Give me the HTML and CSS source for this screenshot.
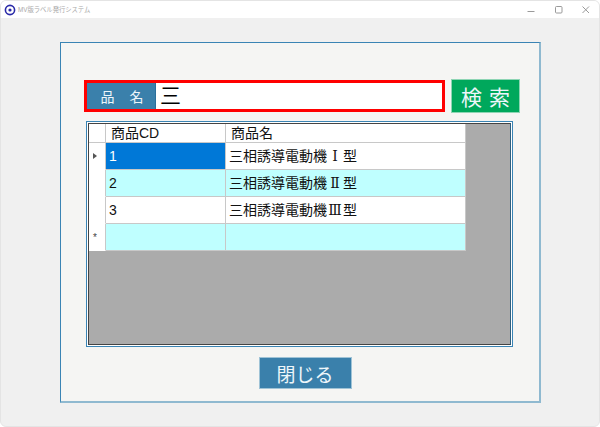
FILE: index.html
```html
<!DOCTYPE html>
<html lang="ja">
<head>
<meta charset="utf-8">
<title>MV版ラベル発行システム</title>
<link rel="stylesheet" href="styles.css">
</head>
<body>
<div class="window">
  <header class="titlebar">
    <svg class="app-icon" width="12" height="12" viewBox="0 0 12 12"><circle cx="6" cy="6" r="4.6" fill="#fff" stroke="#2a2aa8" stroke-width="1.6"/><circle cx="6" cy="6" r="1.6" fill="#2a2aa8"/></svg>
    <span class="title">MV版ラベル発行システム</span>
    <div class="controls">
      <svg width="10" height="10" viewBox="0 0 10 10"><path d="M1.5 6.5H8.5" stroke="#9a9a9a" fill="none"/></svg>
      <svg width="10" height="10" viewBox="0 0 10 10"><rect x="1.5" y="1.5" width="6.5" height="6.5" rx="1" stroke="#9a9a9a" fill="none"/></svg>
      <svg width="10" height="10" viewBox="0 0 10 10"><path d="M1.5 1.5L8 8M8 1.5L1.5 8" stroke="#9a9a9a" fill="none"/></svg>
    </div>
  </header>
  <main class="client">
    <section class="panel">
      <div class="search-row">
        <div class="search-box">
          <div class="search-label"><span>品</span><span>名</span></div>
          <div class="search-input">三</div>
        </div>
        <button class="btn btn-search"><span>検</span><span>索</span></button>
      </div>
      <div class="grid-frame">
        <div class="grid-inner">
          <div class="grid">
            <div class="cell head corner"></div>
            <div class="cell head col">商品CD</div>
            <div class="cell head col">商品名</div>

            <div class="cell rowhead"><span class="arrow"></span></div>
            <div class="cell selected">1</div>
            <div class="cell">三相誘導電動機<span class="roman">Ⅰ</span>型</div>

            <div class="cell rowhead"></div>
            <div class="cell alt">2</div>
            <div class="cell alt">三相誘導電動機<span class="roman">Ⅱ</span>型</div>

            <div class="cell rowhead"></div>
            <div class="cell">3</div>
            <div class="cell">三相誘導電動機<span class="roman">Ⅲ</span>型</div>

            <div class="cell rowhead"><span class="star">*</span></div>
            <div class="cell alt"></div>
            <div class="cell alt"></div>
          </div>
        </div>
      </div>
      <div class="footer-row">
        <button class="btn btn-close">閉じる</button>
      </div>
    </section>
  </main>
</div>
</body>
</html>
```
FILE: styles.css
```css
* { box-sizing: border-box; }
html, body { margin: 0; padding: 0; }
body {
  width: 600px;
  height: 427px;
  background: #fff;
  overflow: hidden;
  font-family: "Liberation Sans", "Noto Sans CJK JP", sans-serif;
}
.window {
  width: 600px;
  height: 427px;
  display: flex;
  flex-direction: column;
  background: #f0f0f0;
  border: 1px solid #e4e4e4;
  border-radius: 6px;
  overflow: hidden;
}
.titlebar {
  height: 17px;
  flex: none;
  background: #fff;
  display: flex;
  align-items: center;
  padding-left: 3px;
}
.app-icon { flex: none; }
.title {
  margin-left: 2px;
  font-size: 6.3px;
  color: #a8a8a8;
  white-space: nowrap;
}
.controls {
  margin-left: auto;
  display: flex;
  gap: 17.5px;
  padding-right: 8px;
  align-items: center;
}
.client {
  flex: 1;
  padding: 24px 0 0 59px;
}
.panel {
  width: 481px;
  height: 361px;
  background: #f5f5f3;
  border: 1px solid #3a84b4;
  border-right: 2px solid #8fb9d0;
  border-bottom: 2px solid #8fb9d0;
  padding: 36px 0 0 23px;
}
.search-row {
  display: flex;
  align-items: center;
  gap: 6px;
  height: 34px;
}
.search-box {
  width: 361px;
  height: 32px;
  border: 3px solid #f00;
  display: flex;
  background: #fff;
}
.search-label {
  width: 69px;
  background: #3a80ab;
  color: #eef6fa;
  font-size: 14px;
  display: flex;
  justify-content: center;
  align-items: center;
  gap: 15px;
  padding-left: 2px;
  border-right: 1px solid #2a6f9b;
}
.search-input {
  flex: 1;
  font-size: 21px;
  line-height: 26px;
  padding-left: 4px;
  color: #000;
}
.btn {
  border: 1px solid #9fc3d6;
  color: #eef6fa;
  font-family: "Noto Sans CJK JP", sans-serif;
  padding: 0;
}
.btn-search {
  width: 69px;
  height: 34px;
  background: #00a85c;
  border-color: #8ed5b4;
  font-size: 21px;
  line-height: 1;
  display: flex;
  justify-content: center;
  align-items: center;
  gap: 7px;
}
.grid-frame {
  margin-top: 8px;
  margin-left: 2px;
  width: 427px;
  height: 226px;
  background: #fff;
  border: 1px solid #3a84b4;
  padding: 1px;
}
.grid-inner {
  height: 100%;
  background: #ababab;
  border: 1px solid #444;
  border-right-color: #2f5f7f;
}
.grid {
  display: grid;
  grid-template-columns: 17px 120px 240px;
  grid-template-rows: 19px 27px 27px 27px 27px;
  width: 377px;
  background: #fff;
}
.cell {
  font-size: 14px;
  line-height: 26px;
  padding-left: 3px;
  color: #111;
  border-right: 1px solid #c8c8c8;
  border-bottom: 1px solid #c8c8c8;
  white-space: nowrap;
  overflow: hidden;
}
.head {
  background: #fff;
  line-height: 18px;
}
.col { padding-left: 5px; }
.corner, .rowhead { padding-left: 0; }
.rowhead {
  background: #fff;
  display: flex;
  align-items: center;
  justify-content: center;
  padding-right: 4px;
  border-bottom: 1px solid #fff;
}
.selected {
  background: #0078d7;
  color: #fff;
}
.alt { background: #bfffff; }
.roman {
  display: inline-block;
  width: 16px;
  text-align: center;
  font-family: "DejaVu Serif", serif;
  font-size: 14px;
}
.arrow {
  width: 0;
  height: 0;
  border-left: 4px solid #555;
  border-top: 3px solid transparent;
  border-bottom: 3px solid transparent;
}
.star {
  font-size: 10px;
  line-height: 9px;
  color: #444;
}
.footer-row {
  display: flex;
  justify-content: center;
  margin-top: 10px;
  padding-right: 13px;
}
.btn-close {
  width: 93px;
  height: 32px;
  background: #3a80ab;
  font-size: 19px;
  line-height: 1;
}
```
